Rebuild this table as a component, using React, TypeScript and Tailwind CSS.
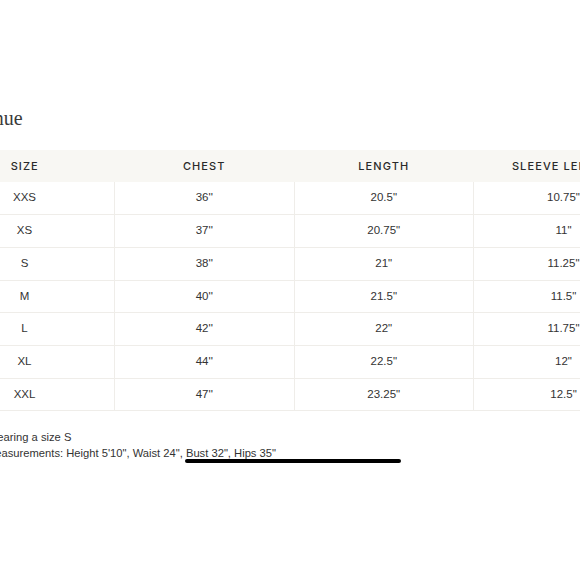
import React from 'react';

const rows = [
  { size: 'XXS', chest: "36''", length: '20.5"', sleeve: '10.75"' },
  { size: 'XS', chest: "37''", length: '20.75"', sleeve: '11"' },
  { size: 'S', chest: "38''", length: '21"', sleeve: '11.25"' },
  { size: 'M', chest: "40''", length: '21.5"', sleeve: '11.5"' },
  { size: 'L', chest: "42''", length: '22"', sleeve: '11.75"' },
  { size: 'XL', chest: "44''", length: '22.5"', sleeve: '12"' },
  { size: 'XXL', chest: "47''", length: '23.25"', sleeve: '12.5"' },
];

const headers = ['Size', 'Chest', 'Length', 'Sleeve Length'];

export default function App() {
  return (
    <div className="relative w-[580px] h-[580px] overflow-hidden bg-white font-['Liberation_Sans',Arial,sans-serif] text-[#333]">
      <div className="ml-[-65px] w-[720px] pt-[104px]">
        {/* title, cut by the left edge */}
        <h2 className="ml-[27px] h-[46px] text-[20px] leading-[28px] font-['Liberation_Serif',serif] text-[#3a3a3a]">
          Avenue
        </h2>

        <table className="w-[718px] table-fixed border-collapse text-[11.5px]">
          <thead>
            <tr className="bg-[#f8f7f3] h-[32px]">
              {headers.map((h) => (
                <th
                  key={h}
                  className="w-[179.5px] text-center text-[11px] font-['Inter',sans-serif] font-medium uppercase tracking-[0.1em] text-[#2a2a2a] whitespace-nowrap"
                >
                  {h}
                </th>
              ))}
            </tr>
          </thead>
          <tbody>
            {rows.map((r) => (
              <tr key={r.size} className="h-[32.7px] border-b border-[#efede9]">
                <td className="text-center border-r border-[#efede9]">{r.size}</td>
                <td className="text-center border-r border-[#efede9]">{r.chest}</td>
                <td className="text-center border-r border-[#efede9]">{r.length}</td>
                <td className="text-center">{r.sleeve}</td>
              </tr>
            ))}
          </tbody>
        </table>

        <div className="ml-[55px] mt-[18px] text-[11.2px] leading-[16px] text-[#333]">
          <p className="-ml-[3px]">Wearing a size S</p>
          <p className="-ml-[4px]">
            Measurements: Height 5&apos;10&quot;, Waist 24&quot;, Bust 32&quot;, Hips 35&quot;
          </p>
        </div>
      </div>

      {/* hand-drawn underline annotation */}
      <div className="absolute left-[185px] top-[459px] w-[216px] h-[4px] rounded-full bg-black" />
    </div>
  );
}
